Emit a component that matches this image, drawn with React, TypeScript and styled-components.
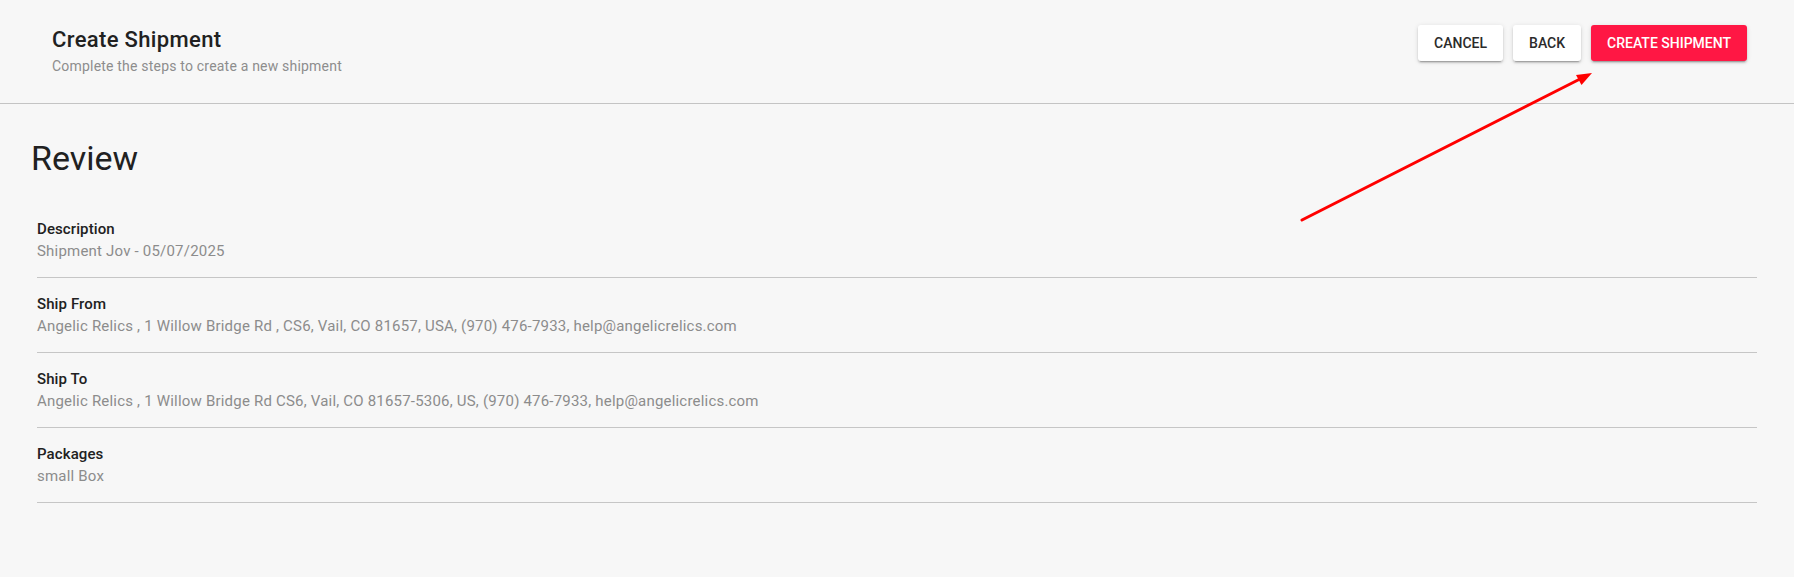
import styled, { createGlobalStyle } from 'styled-components';

const GlobalStyle = createGlobalStyle`
  html, body {
    margin: 0;
    padding: 0;
    background: #f7f7f7;
    font-family: Roboto, 'Liberation Sans', Arial, sans-serif;
  }
`;

const Page = styled.div`
  position: relative;
  min-height: 577px;
  background: #f7f7f7;
`;

const Header = styled.header`
  box-sizing: border-box;
  height: 104px;
  display: flex;
  justify-content: space-between;
  align-items: flex-start;
  padding: 25px 47px 0 52px;
  border-bottom: 1px solid #c4c4c4;
`;

const TitleBlock = styled.div`
  display: flex;
  flex-direction: column;
`;

const Title = styled.h1`
  margin: 0;
  font-size: 22px;
  line-height: 30px;
  font-weight: 500;
  letter-spacing: 0.35px;
  color: #212121;
`;

const Subtitle = styled.p`
  margin: 0;
  font-size: 14px;
  line-height: 22px;
  letter-spacing: 0.2px;
  color: #8d8d8d;
`;

const Actions = styled.div`
  display: flex;
  gap: 10px;
`;

const Button = styled.button<{ $primary?: boolean }>`
  height: 36px;
  padding: 0 16px;
  border: none;
  border-radius: 3px;
  font-family: inherit;
  font-size: 14px;
  font-weight: 500;
  text-transform: uppercase;
  cursor: pointer;
  background: ${(p) => (p.$primary ? '#ff1744' : '#ffffff')};
  color: ${(p) => (p.$primary ? '#ffffff' : '#2b2b2b')};
  box-shadow: 0 3px 1px -2px rgba(0, 0, 0, 0.2), 0 2px 2px 0 rgba(0, 0, 0, 0.14),
    0 1px 5px 0 rgba(0, 0, 0, 0.12);
`;

const Content = styled.main`
  padding: 0 37px 0 31px;
`;

const SectionTitle = styled.h2`
  margin: 33px 0 24px;
  font-size: 34px;
  line-height: 42px;
  font-weight: 400;
  color: #212121;
`;

const List = styled.div`
  margin-left: 6px;
`;

const Row = styled.div`
  padding: 16px 0 14px;
  border-bottom: 1px solid #c6c6c6;
`;

const Label = styled.div`
  font-size: 15px;
  line-height: 20px;
  font-weight: 500;
  letter-spacing: 0.1px;
  color: #212121;
`;

const Value = styled.div`
  font-size: 15px;
  line-height: 24px;
  letter-spacing: 0.2px;
  color: #8c8c8c;
`;

const Arrow = styled.svg`
  position: absolute;
  left: 0;
  top: 0;
  pointer-events: none;
`;

const rows = [
  { label: 'Description', value: 'Shipment Jov - 05/07/2025' },
  {
    label: 'Ship From',
    value:
      'Angelic Relics , 1 Willow Bridge Rd , CS6, Vail, CO 81657, USA, (970) 476-7933, help@angelicrelics.com',
  },
  {
    label: 'Ship To',
    value:
      'Angelic Relics , 1 Willow Bridge Rd CS6, Vail, CO 81657-5306, US, (970) 476-7933, help@angelicrelics.com',
  },
  { label: 'Packages', value: 'small Box' },
];

const App = () => {
  return (
    <Page>
      <GlobalStyle />
      <Header>
        <TitleBlock>
          <Title>Create Shipment</Title>
          <Subtitle>Complete the steps to create a new shipment</Subtitle>
        </TitleBlock>
        <Actions>
          <Button>Cancel</Button>
          <Button>Back</Button>
          <Button $primary>Create Shipment</Button>
        </Actions>
      </Header>
      <Content>
        <SectionTitle>Review</SectionTitle>
        <List>
          {rows.map((r) => (
            <Row key={r.label}>
              <Label>{r.label}</Label>
              <Value>{r.value}</Value>
            </Row>
          ))}
        </List>
      </Content>
      <Arrow width="1794" height="577" viewBox="0 0 1794 577">
        <line x1="1302" y1="220" x2="1580" y2="79" stroke="#ff0000" strokeWidth="3" strokeLinecap="round" />
        <polygon points="1592,73 1576,75 1581.5,85" fill="#ff0000" />
      </Arrow>
    </Page>
  );
};

export default App;
